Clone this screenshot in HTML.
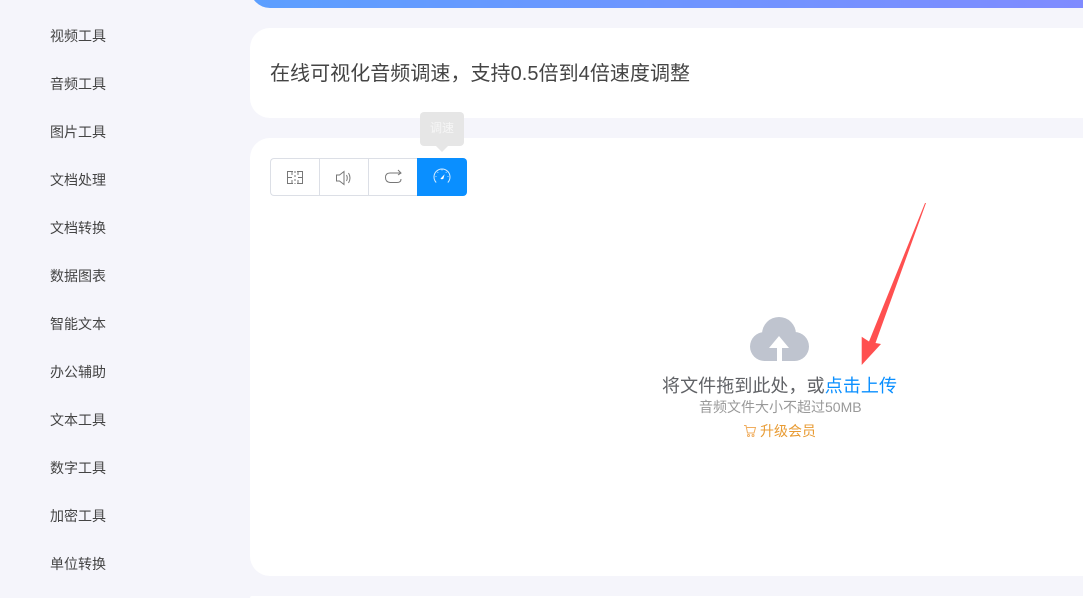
<!DOCTYPE html>
<html lang="zh">
<head>
<meta charset="utf-8">
<style>
html,body{margin:0;padding:0;width:1083px;height:598px;overflow:hidden;background:#f5f5fb;font-family:"Liberation Sans","Noto Sans CJK SC",sans-serif;}
#page{position:relative;width:1083px;height:598px;overflow:hidden;background:#f5f5fb;}
.a{position:absolute;white-space:nowrap;}
.nav{left:50px;font-size:14px;line-height:20px;color:#444;}
.card{position:absolute;left:250px;width:833px;background:#fff;}
svg{position:absolute;display:block;}
</style>
</head>
<body>
<div id="page">
<div class="a nav" style="top:26px">视频工具</div>
<div class="a nav" style="top:74px">音频工具</div>
<div class="a nav" style="top:122px">图片工具</div>
<div class="a nav" style="top:170px">文档处理</div>
<div class="a nav" style="top:218px">文档转换</div>
<div class="a nav" style="top:266px">数据图表</div>
<div class="a nav" style="top:314px">智能文本</div>
<div class="a nav" style="top:362px">办公辅助</div>
<div class="a nav" style="top:410px">文本工具</div>
<div class="a nav" style="top:458px">数字工具</div>
<div class="a nav" style="top:506px">加密工具</div>
<div class="a nav" style="top:554px">单位转换</div>

<div class="a" style="left:250px;top:-32px;width:833px;height:40px;border-radius:0 0 0 20px;background:linear-gradient(90deg,#5c9fff,#7f8bff);"></div>
<div class="card" style="top:28px;height:90px;border-radius:20px 0 0 20px;"></div>
<div class="a" style="left:270px;top:61px;font-size:20px;line-height:27px;color:#444;letter-spacing:.05px;">在线可视化音频调速，支持0.5倍到4倍速度调整</div>
<div class="card" style="top:138px;height:438px;border-radius:20px 0 0 20px;"></div>
<div class="card" style="top:596px;height:2px;border-radius:20px 0 0 0;"></div>

<!-- tooltip -->
<div class="a" style="left:420px;top:112px;width:44px;height:34px;background:#e6e6e6;border-radius:4px;color:#f6f6f6;font-size:12px;line-height:33px;text-align:center;">调速</div>
<div class="a" style="left:436px;top:146px;width:0;height:0;border-left:6px solid transparent;border-right:6px solid transparent;border-top:6px solid #e6e6e6;"></div>

<!-- tabs -->
<div class="a" style="left:270px;top:158px;width:148px;height:38px;box-sizing:border-box;border:1px solid #dcdfe6;border-right:0;border-radius:4px 0 0 4px;background:#fff;"></div>
<div class="a" style="left:319px;top:158px;width:1px;height:38px;background:#dcdfe6;"></div>
<div class="a" style="left:368px;top:158px;width:1px;height:38px;background:#dcdfe6;"></div>
<div class="a" style="left:417px;top:158px;width:50px;height:38px;background:#0a8fff;border-radius:0 4px 4px 0;"></div>

<svg style="left:286px;top:170px" width="18" height="15" viewBox="0 0 18 15" fill="none" stroke="#777" stroke-width="1">
<path d="M7 1.5H1.5V13.5H7M1.5 7.5H6M6 1.5V5M6 10V13.5"/>
<path d="M11 1.5H16.5V13.5H11M16.5 7.5H12M12 1.5V5M12 10V13.5"/>
<path d="M9 1V14" stroke-dasharray="2 2"/>
</svg>
<svg style="left:335px;top:170px" width="18" height="16" viewBox="0 0 18 16" fill="none" stroke="#777" stroke-width="1">
<path d="M1.5 5V11H4.5L9 14.5V1.5L4.5 5Z"/>
<path d="M11.5 5Q13 8 11.5 11M13.5 3Q16.5 8 13.5 13"/>
</svg>
<svg style="left:384px;top:168px" width="19" height="17" viewBox="0 0 19 17" fill="none" stroke="#777" stroke-width="1">
<path d="M17 5H6Q1.5 5 1.5 9.5T6 14.5H13Q17 14.5 17 11"/>
<path d="M14 2L17 5L14 7"/>
</svg>
<svg style="left:433px;top:167px" width="18" height="18" viewBox="0 0 18 18" fill="none" stroke="#d9eeff" stroke-width="1">
<path d="M3.2 15.5A8 8 0 1 1 14.8 15.5"/>
<path d="M3.5 9.5H2.5M15.5 9.5H14.5M9 2.5V3.5M4.5 5L5.2 5.7M13.5 5L12.8 5.7" stroke-width=".8"/>
<path d="M7.4 11.8L11.6 7.2L10.4 11.8Q9 12.8 7.4 11.8Z" fill="#fff" stroke="none"/>
</svg>

<!-- cloud -->
<svg style="left:749px;top:316px" width="61" height="46" viewBox="0 0 61 46">
<circle cx="30" cy="18" r="17" fill="#bfc4cf"/>
<circle cx="15.5" cy="30.5" r="14.5" fill="#bfc4cf"/>
<circle cx="45.5" cy="30.5" r="14.5" fill="#bfc4cf"/>
<rect x="15" y="24" width="31" height="21" fill="#bfc4cf"/>
<path d="M30 20L40 32H33V45H28V32H20Z" fill="#fff"/>
</svg>

<div class="a" style="left:662px;top:374px;font-size:18px;line-height:24px;color:#606266;letter-spacing:.08px;">将文件拖到此处，或<span style="color:#0a8fff">点击上传</span></div>
<div class="a" style="left:699px;top:398px;font-size:14px;line-height:18px;color:#999;">音频文件大小不超过50MB</div>
<svg style="left:743px;top:424px" width="14" height="14" viewBox="0 0 14 14" fill="none" stroke="#f0ad5e" stroke-width="1">
<path d="M1 1.5H3L4.5 9H11L12.5 3.5H3.5"/>
<circle cx="5.5" cy="11.5" r="1"/>
<circle cx="10" cy="11.5" r="1"/>
</svg>
<div class="a" style="left:760px;top:422px;font-size:14px;line-height:18px;color:#e89b33;">升级会员</div>

<!-- arrow -->
<svg style="left:840px;top:190px" width="100" height="190" viewBox="0 0 100 190">
<path d="M86 13L35.5 153L41 154L21.7 175L21.7 146.7L29 151.5L85 13Z" fill="#ff5050"/>
</svg>
</div>
</body>
</html>
